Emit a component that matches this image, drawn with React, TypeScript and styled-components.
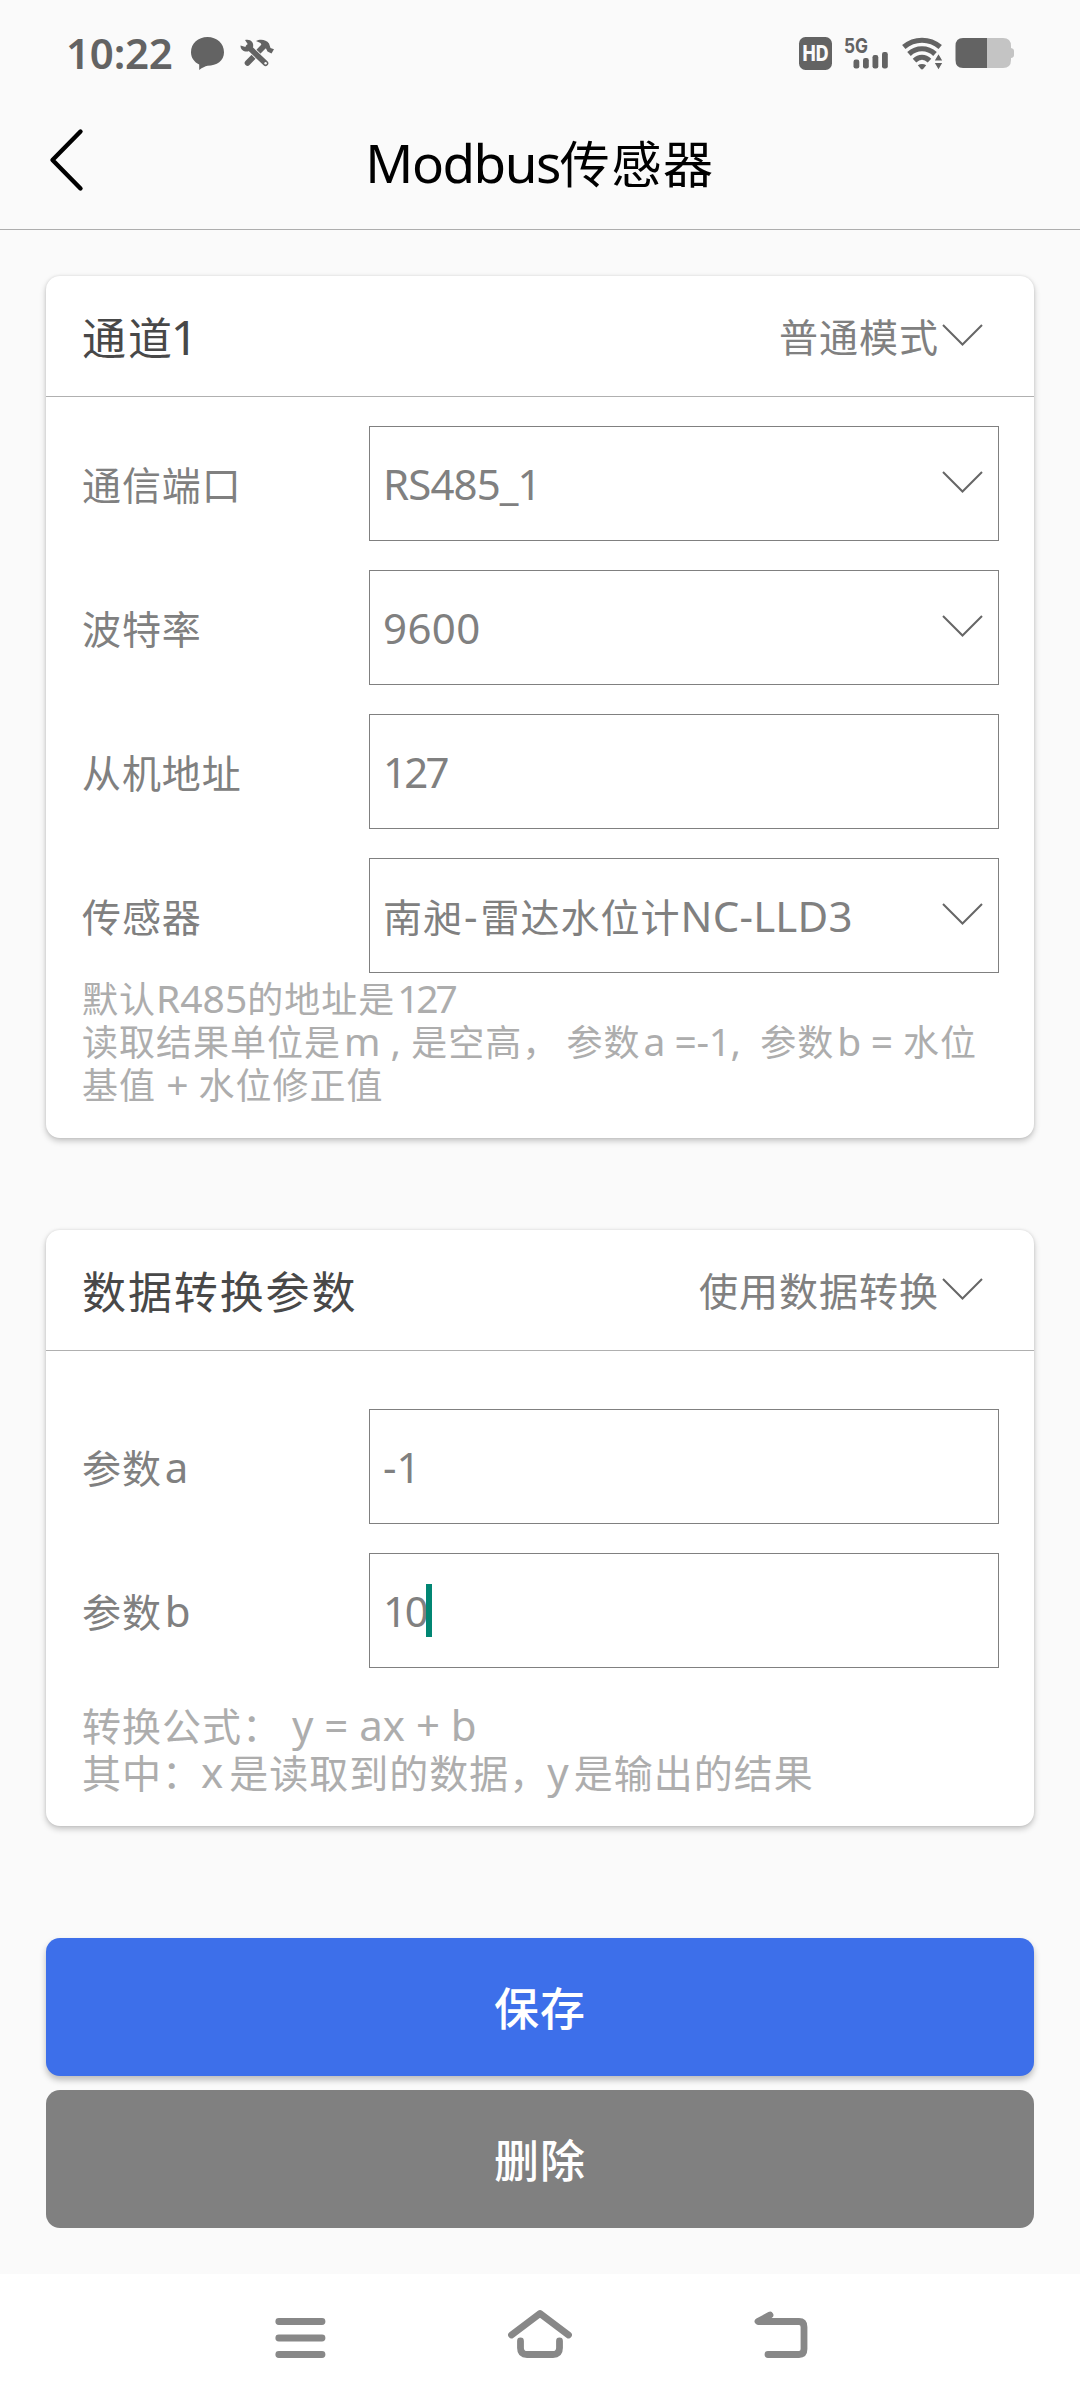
import React from "react";
import styled, { createGlobalStyle } from "styled-components";

const GlobalStyle = createGlobalStyle`
  * { box-sizing: border-box; }
  body { margin: 0; background: #fafafa; }
`;

const Screen = styled.div`
  width: 1080px;
  height: 2400px;
  display: flex;
  flex-direction: column;
  background: #fafafa;
  font-family: "Noto Sans CJK SC", sans-serif;
  color: #808080;
  overflow: hidden;
`;

const StatusBar = styled.header`
  height: 90px;
  padding: 16px 65px 0 66px;
  display: flex;
  align-items: center;
  color: #636363;
`;

const Clock = styled.span`
  width: 125px;
  font: 600 42px/50px "Noto Sans", sans-serif;
  letter-spacing: -0.2px;
`;

const StatusIcons = styled.div<{ $gap: number; $right?: boolean }>`
  margin-left: ${(p) => (p.$right ? "auto" : "0")};
  display: flex;
  align-items: center;
  gap: ${(p) => p.$gap}px;
`;

const StatusGlyph = styled.svg`
  display: block;
  overflow: visible;
`;

const TitleBar = styled.div`
  height: 140px;
  border-bottom: 1px solid #adadad;
  padding: 0 48px;
  display: grid;
  grid-template-columns: 60px 1fr 60px;
  align-items: center;
`;

const PageTitle = styled.h1`
  margin: 3px 0 0;
  text-align: center;
  font-size: 50px;
  font-weight: 400;
  line-height: 60px;
  letter-spacing: 1.6px;
  color: #000;
  white-space: nowrap;
`;

const Main = styled.main`
  flex: 1;
  padding: 46px 46px 0;
`;

const Card = styled.section<{ $height: number; $after: number }>`
  height: ${(p) => p.$height}px;
  margin-bottom: ${(p) => p.$after}px;
  border-radius: 14px;
  background: #fff;
  box-shadow: 0 3px 6px rgba(0, 0, 0, 0.22), 0 0 3px rgba(0, 0, 0, 0.1);
`;

const CardHead = styled.div`
  height: 121px;
  border-bottom: 1px solid #b0b0b0;
  padding: 0 51px 0 36px;
  display: flex;
  align-items: center;
  justify-content: space-between;
`;

const CardTitle = styled.h2`
  margin: 0;
  font-size: 44px;
  font-weight: 400;
  line-height: 60px;
  letter-spacing: 1.9px;
  color: #484848;
`;

const ModeSelect = styled.div`
  display: flex;
  align-items: center;
  gap: 3px;
  margin-bottom: 3px;
  font-size: 39px;
  line-height: 60px;
  letter-spacing: 1px;
`;

const Fields = styled.div<{ $top: number }>`
  padding: ${(p) => p.$top}px 35px 0 36px;
  display: flex;
  flex-direction: column;
  gap: 29px;
`;

const Row = styled.div`
  display: grid;
  grid-template-columns: 287px 630px;
  height: 115px;
  align-items: center;
`;

const Label = styled.label`
  margin-bottom: 2px;
  font-size: 39px;
  line-height: 60px;
  letter-spacing: 0.9px;
`;

const Box = styled.div`
  height: 115px;
  border: 1px solid #808080;
  padding: 0 15px 0 13px;
  display: flex;
  align-items: center;
  font-size: 39px;
  line-height: 60px;
  letter-spacing: 1px;
  white-space: nowrap;
`;

const BoxChevron = styled.span`
  margin: -3px 0 0 auto;
  display: flex;
`;

const Mixed = styled.span`
  margin-bottom: 2px;
`;

const Latin = styled.span<{ $size?: number; $l?: number; $r?: number; $track?: number }>`
  font-family: "Noto Sans", sans-serif;
  font-size: ${(p) => p.$size ?? 42}px;
  line-height: 1;
  letter-spacing: ${(p) => p.$track ?? 0}px;
  margin-left: ${(p) => p.$l ?? 0}px;
  margin-right: ${(p) => p.$r ?? 0}px;
`;

const Caret = styled.span`
  width: 6px;
  height: 53px;
  margin-left: -1px;
  background: #018673;
`;

const Hint = styled.div<{ $top: number; $size: number }>`
  padding: ${(p) => p.$top}px 0 0 36px;
  font-size: ${(p) => p.$size}px;
  letter-spacing: 1px;
  color: #adadad;
  white-space: pre;
`;

const HintLine = styled.div<{ $line: number }>`
  height: ${(p) => p.$line}px;
  line-height: ${(p) => p.$line}px;
`;

const Actions = styled.div`
  display: flex;
  flex-direction: column;
  gap: 14px;
`;

const Action = styled.button<{ $primary?: boolean }>`
  height: 138px;
  border: 0;
  border-radius: 14px;
  background: ${(p) => (p.$primary ? "#3d6fea" : "#808080")};
  box-shadow: ${(p) => (p.$primary ? "0 4px 6px rgba(0, 0, 0, 0.25)" : "none")};
  color: #fff;
  font: 500 45px/60px "Noto Sans CJK SC", sans-serif;
  letter-spacing: 1px;
`;

const NavBar = styled.nav`
  height: 126px;
  padding-bottom: 5px;
  background: #fff;
  display: flex;
  justify-content: center;
  align-items: center;
  gap: 176px;
`;

const Chevron = () => (
  <svg width="41" height="24" viewBox="0 0 41 24" fill="none" stroke="#666" strokeWidth="2">
    <path d="M1 2 20.5 21.5 40 2" />
  </svg>
);

const ChatIcon = () => (
  <StatusGlyph width="33" height="33" viewBox="0 0 33 33" fill="#636363">
    <path d="M16.500 0C25.800 0 33 6.400 33 15.200S25.800 28.500 16.500 28.800C14 29.500 11.500 30.500 8.200 33V27.600C3.300 25 0 20.800 0 15.200 0 6.400 7.200 0 16.500 0Z" />
  </StatusGlyph>
);

const ToolsIcon = () => (
  <StatusGlyph width="34" height="28" viewBox="0 0 34 28" fill="none">
    <path d="M7.500 24 23.500 7.500" stroke="#636363" strokeWidth="5.600" strokeLinecap="round" />
    <path d="M16 2C20-.2 26 .2 29 4.500L30.500 9 34 10.200 31.500 14.500 27.500 12.500 26 9.500 23 8.500 20.500 4Z" fill="#636363" />
    <path d="M9 8.500 23 22" stroke="#fafafa" strokeWidth="7.200" />
    <path d="M8.500 8 25.500 24.300" stroke="#636363" strokeWidth="5.600" strokeLinecap="round" />
    <path d="M5 1C10-.5 14.500 3 13 8.500L8 12.500C4 13 .5 11 .5 6.500L5.500 8 8 5.500Z" fill="#636363" />
    <circle cx="25.600" cy="24.300" r="1.200" fill="#fafafa" />
  </StatusGlyph>
);

const HdIcon = () => (
  <StatusGlyph width="33" height="33" viewBox="0 0 33 33">
    <rect width="33" height="33" rx="6.500" fill="#636363" />
    <text x="3.500" y="24.200" fill="#fafafa" fontFamily="Inter, sans-serif" fontWeight="800" fontSize="21" textLength="26" lengthAdjust="spacingAndGlyphs">HD</text>
  </StatusGlyph>
);

const SignalIcon = () => (
  <StatusGlyph width="46" height="34" viewBox="0 0 46 34" fill="#636363">
    <text x="0" y="17" fontFamily="Inter, sans-serif" fontWeight="700" fontSize="20.500" textLength="24" lengthAdjust="spacingAndGlyphs">5G</text>
    <rect x="9.500" y="23.500" width="5.800" height="9" rx="2.200" />
    <rect x="19" y="22" width="5.800" height="10.500" rx="2.200" />
    <rect x="28.500" y="19" width="5.800" height="13.500" rx="2.200" />
    <rect x="38" y="16" width="5.800" height="16.500" rx="2.200" />
  </StatusGlyph>
);

const WifiIcon = () => (
  <StatusGlyph width="41" height="33" viewBox="0 0 41 33" fill="none" stroke="#636363" strokeWidth="5.200">
    <path d="M1.800 10C12.500 1 27.500 1 38.200 10" />
    <path d="M7 17C14.500 10 25.500 10 33 17" />
    <path d="M12.500 23.600C17 19.400 23 19.400 27.500 23.600" />
    <path d="M15.800 28.200Q20 25.600 24.200 28.200L21.300 31.800Q20 33.200 18.700 31.800Z" fill="#636363" stroke="none" />
    <path d="M36.500 16 41.500 24.300H31.500ZM36.500 33.500 31.500 25.200H41.500Z" fill="#636363" stroke="#fafafa" strokeWidth="1.400" />
  </StatusGlyph>
);

const BatteryIcon = () => (
  <StatusGlyph width="60" height="30" viewBox="0 0 60 30">
    <path d="M32 0H48Q56 0 56 8V10Q59 10.500 59 13V17Q59 19.500 56 20V22Q56 30 48 30H32Z" fill="#c4c4c4" />
    <path d="M32 0H8Q0.500 0 0.500 8V22Q0.500 30 8 30H32Z" fill="#636363" />
  </StatusGlyph>
);

const BackIcon = () => (
  <svg width="38" height="64" viewBox="0 0 38 64" fill="none" stroke="#000" strokeWidth="4.400" strokeLinecap="round" strokeLinejoin="round">
    <path d="M32.500 3.500 4.500 32 32.500 60.500" />
  </svg>
);

const NavIcon = ({ children }: { children: React.ReactNode }) => (
  <svg width="64" height="50" viewBox="0 0 64 50" fill="none" stroke="#888" strokeWidth="6.800" strokeLinecap="round" strokeLinejoin="round">
    {children}
  </svg>
);

const SelectBox = ({ children }: { children: React.ReactNode }) => (
  <Box>
    {children}
    <BoxChevron>
      <Chevron />
    </BoxChevron>
  </Box>
);

export default function App() {
  return (
    <Screen>
      <GlobalStyle />
      <StatusBar>
        <Clock>10:22</Clock>
        <StatusIcons $gap={16}>
          <ChatIcon />
          <ToolsIcon />
        </StatusIcons>
        <StatusIcons $gap={12} $right>
          <HdIcon />
          <SignalIcon />
          <WifiIcon />
          <BatteryIcon />
        </StatusIcons>
      </StatusBar>
      <TitleBar>
        <BackIcon />
        <PageTitle>
          <Latin $size={53} $track={-1.5}>Modbus</Latin>传感器
        </PageTitle>
      </TitleBar>

      <Main>
        <Card $height={862} $after={92}>
          <CardHead>
            <CardTitle>
              通道<Latin $size={48} $l={-3}>1</Latin>
            </CardTitle>
            <ModeSelect>
              普通模式
              <Chevron />
            </ModeSelect>
          </CardHead>
          <Fields $top={29}>
            <Row>
              <Label>通信端口</Label>
              <SelectBox>
                <Latin $track={-0.9}>RS485_1</Latin>
              </SelectBox>
            </Row>
            <Row>
              <Label>波特率</Label>
              <SelectBox>
                <Latin $track={0.4}>9600</Latin>
              </SelectBox>
            </Row>
            <Row>
              <Label>从机地址</Label>
              <Box>
                <Latin $track={-2.8}>127</Latin>
              </Box>
            </Row>
            <Row>
              <Label>传感器</Label>
              <SelectBox>
                <Mixed>
                  南昶<Latin $l={1} $r={3}>-</Latin>雷达水位计<Latin $track={0.2}>NC-LLD3</Latin>
                </Mixed>
              </SelectBox>
            </Row>
          </Fields>
          <Hint $top={3} $size={36}>
            <HintLine $line={43}>
              默认<Latin $size={39}>R485</Latin>的地址是<Latin $size={39} $l={2} $track={-3.2}>127</Latin>
            </HintLine>
            <HintLine $line={43}>
              读取结果单位是<Latin $size={39} $l={3}>m , </Latin>是空高，<Latin $size={39} $r={-3}> </Latin>参数
              <Latin $size={39} $l={3} $track={-0.4}>a =-1,  </Latin>参数<Latin $size={39} $l={3} $track={-0.2}>b = </Latin>水位
            </HintLine>
            <HintLine $line={43}>
              基值<Latin $size={39}> + </Latin>水位修正值
            </HintLine>
          </Hint>
        </Card>

        <Card $height={596} $after={112}>
          <CardHead>
            <CardTitle>数据转换参数</CardTitle>
            <ModeSelect>
              使用数据转换
              <Chevron />
            </ModeSelect>
          </CardHead>
          <Fields $top={58}>
            <Row>
              <Label>
                参数<Latin $l={3}>a</Latin>
              </Label>
              <Box>
                <Latin>-1</Latin>
              </Box>
            </Row>
            <Row>
              <Label>
                参数<Latin $l={3}>b</Latin>
              </Label>
              <Box>
                <Latin $track={-2.2}>10</Latin>
                <Caret />
              </Box>
            </Row>
          </Fields>
          <Hint $top={33} $size={39}>
            <HintLine $line={47}>
              转换公式：<Latin $l={-1}> y = ax + b</Latin>
            </HintLine>
            <HintLine $line={47}>
              其中：<Latin $l={-1} $r={6}>x</Latin>是读取到的数据，<Latin $l={-2} $r={5}>y</Latin>是输出的结果
            </HintLine>
          </Hint>
        </Card>

        <Actions>
          <Action $primary>保存</Action>
          <Action>删除</Action>
        </Actions>
      </Main>

      <NavBar>
        <NavIcon>
          <path d="M10.800 11.500H54M10.800 28H54M10.800 44.500H54" />
        </NavIcon>
        <NavIcon>
          <path d="M3.500 25 32 3.500 60.500 25M12.500 31V38Q12.500 44.500 19 44.500H45Q51.500 44.500 51.500 38V31" />
        </NavIcon>
        <NavIcon>
          <path d="M22 5 10 11.500H51Q56 11.500 56 17V39Q56 44.500 51 44.500H20" />
        </NavIcon>
      </NavBar>
    </Screen>
  );
}
